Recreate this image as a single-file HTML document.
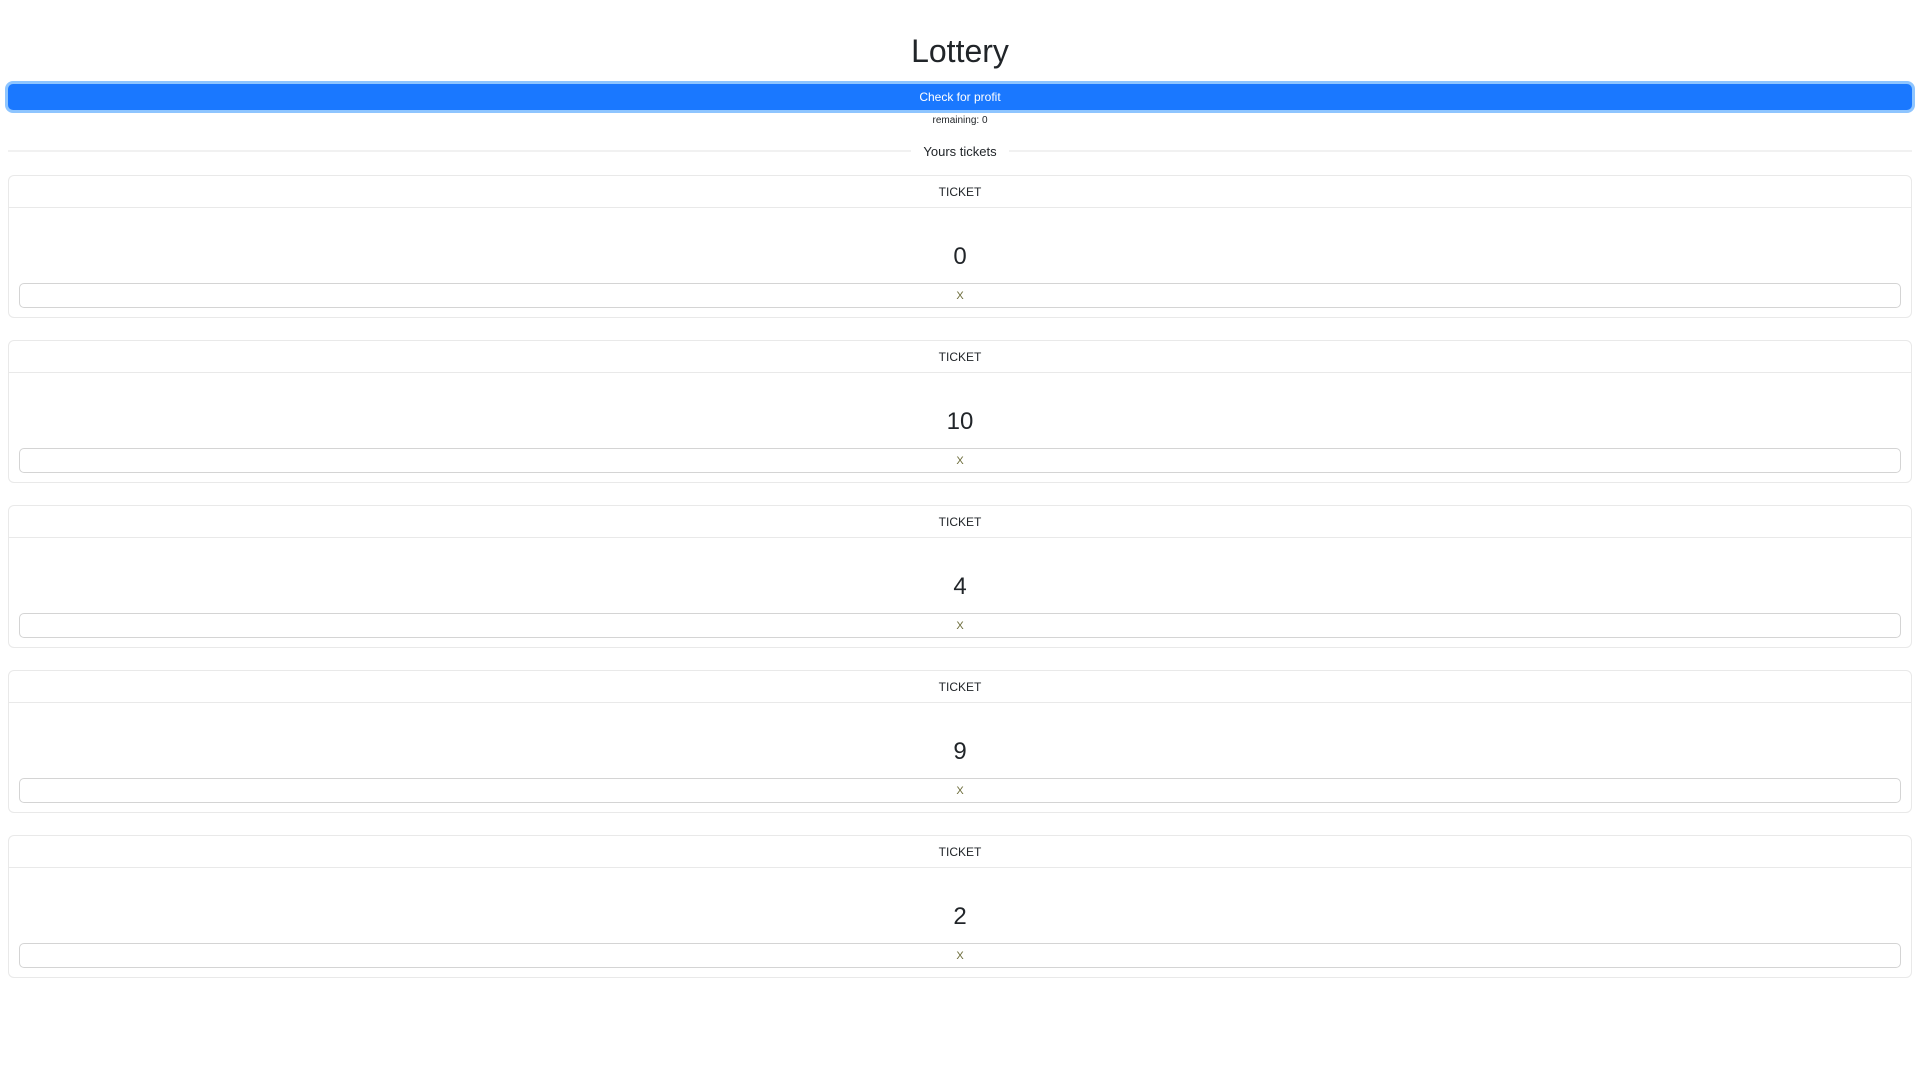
<!DOCTYPE html>
<html><head><meta charset="utf-8"><style>
*{box-sizing:border-box;margin:0;padding:0}
body{width:1920px;height:1080px;background:#fff;font-family:"Liberation Sans",sans-serif;color:#212529;position:relative;overflow:hidden}
h1{position:absolute;top:29px;left:0;width:1920px;text-align:center;font-size:32px;font-weight:500;line-height:44px}
.btn{position:absolute;left:8px;top:84px;width:1904px;height:26px;background:#1a78ff;border-radius:5px;box-shadow:0 0 0 3px #8ec5ff;color:#fff;text-align:center;font-size:12px;line-height:26px}
.rem{position:absolute;top:114px;left:0;width:1920px;text-align:center;font-size:10px;line-height:14px}
.hr{position:absolute;top:150px;left:8px;width:1904px;height:2px;background:#f1f1f1}
.yt{position:absolute;top:143px;left:0;width:1920px;text-align:center}
.yt span{background:#fff;padding:0 12px;font-size:13px;line-height:16px}
.card{position:absolute;left:8px;width:1904px;height:143px;border:1px solid #e9e9e9;border-radius:6px}
.hd{height:32px;border-bottom:1px solid #e9e9e9;text-align:center;font-size:12px;line-height:32px}
.bd{padding:12px 10px}
.num{height:63px;padding-top:12px;line-height:49px;text-align:center;font-size:24px}
.x{height:25px;border:1px solid #d4d4d4;border-radius:5px;text-align:center;font-size:11px;line-height:24px;color:#6c6c3a}
</style></head><body>
<h1>Lottery</h1>
<div class="btn">Check for profit</div>
<div class="rem">remaining: 0</div>
<div class="hr"></div>
<div class="yt"><span>Yours tickets</span></div>
<div class="card" style="top:175px"><div class="hd">TICKET</div><div class="bd"><div class="num">0</div><div class="x">X</div></div></div>
<div class="card" style="top:340px"><div class="hd">TICKET</div><div class="bd"><div class="num">10</div><div class="x">X</div></div></div>
<div class="card" style="top:505px"><div class="hd">TICKET</div><div class="bd"><div class="num">4</div><div class="x">X</div></div></div>
<div class="card" style="top:670px"><div class="hd">TICKET</div><div class="bd"><div class="num">9</div><div class="x">X</div></div></div>
<div class="card" style="top:835px"><div class="hd">TICKET</div><div class="bd"><div class="num">2</div><div class="x">X</div></div></div>
</body></html>
